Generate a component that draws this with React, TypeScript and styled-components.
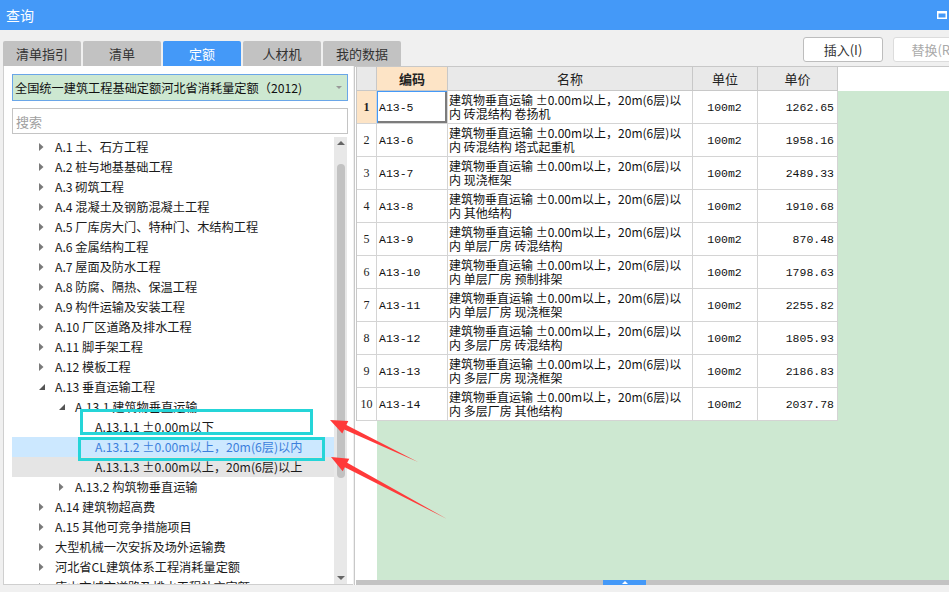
import React from "react"
import styled, { createGlobalStyle } from "styled-components"

const Blue = "#4499f8"
const Green = "#cde8d1"
const Peach = "#fde4c6"
const COLS = "20px 71px 245px 65px 80px"

const GlobalStyle = createGlobalStyle`
  html, body { margin: 0; padding: 0; }
  body {
    background: #f0f0f0;
    font-family: "Noto Sans CJK SC", "Noto Sans", sans-serif;
    color: #222;
  }
`

const TABS = ["清单指引", "清单", "定额", "人材机", "我的数据"]
const ACTIVE_TAB = 2

type TreeNode = {
  label: string
  level: number
  caret?: "open" | "closed"
  state?: "selected" | "hover"
}

const TREE: TreeNode[] = [
  { label: "A.1 土、石方工程", level: 0, caret: "closed" },
  { label: "A.2 桩与地基基础工程", level: 0, caret: "closed" },
  { label: "A.3 砌筑工程", level: 0, caret: "closed" },
  { label: "A.4 混凝土及钢筋混凝土工程", level: 0, caret: "closed" },
  { label: "A.5 厂库房大门、特种门、木结构工程", level: 0, caret: "closed" },
  { label: "A.6 金属结构工程", level: 0, caret: "closed" },
  { label: "A.7 屋面及防水工程", level: 0, caret: "closed" },
  { label: "A.8 防腐、隔热、保温工程", level: 0, caret: "closed" },
  { label: "A.9 构件运输及安装工程", level: 0, caret: "closed" },
  { label: "A.10 厂区道路及排水工程", level: 0, caret: "closed" },
  { label: "A.11 脚手架工程", level: 0, caret: "closed" },
  { label: "A.12 模板工程", level: 0, caret: "closed" },
  { label: "A.13 垂直运输工程", level: 0, caret: "open" },
  { label: "A.13.1 建筑物垂直运输", level: 1, caret: "open" },
  { label: "A.13.1.1 ±0.00m以下", level: 2 },
  { label: "A.13.1.2 ±0.00m以上，20m(6层)以内", level: 2, state: "selected" },
  { label: "A.13.1.3 ±0.00m以上，20m(6层)以上", level: 2, state: "hover" },
  { label: "A.13.2 构筑物垂直运输", level: 1, caret: "closed" },
  { label: "A.14 建筑物超高费", level: 0, caret: "closed" },
  { label: "A.15 其他可竞争措施项目", level: 0, caret: "closed" },
  { label: "大型机械一次安拆及场外运输费", level: 0, caret: "closed" },
  { label: "河北省CL建筑体系工程消耗量定额", level: 0, caret: "closed" },
  { label: "唐山市城市道路及排水工程补充定额", level: 0, caret: "closed" },
]

const NAME_HEAD = "建筑物垂直运输 ±0.00m以上，20m(6层)以"

const ROWS = [
  { code: "A13-5", tail: "内 砖混结构 卷扬机", price: "1262.65" },
  { code: "A13-6", tail: "内 砖混结构 塔式起重机", price: "1958.16" },
  { code: "A13-7", tail: "内 现浇框架", price: "2489.33" },
  { code: "A13-8", tail: "内 其他结构", price: "1910.68" },
  { code: "A13-9", tail: "内 单层厂房 砖混结构", price: "870.48" },
  { code: "A13-10", tail: "内 单层厂房 预制排架", price: "1798.63" },
  { code: "A13-11", tail: "内 单层厂房 现浇框架", price: "2255.82" },
  { code: "A13-12", tail: "内 多层厂房 砖混结构", price: "1805.93" },
  { code: "A13-13", tail: "内 多层厂房 现浇框架", price: "2186.83" },
  { code: "A13-14", tail: "内 多层厂房 其他结构", price: "2037.78" },
]

const Caret: React.FC<{ kind?: "open" | "closed" }> = ({ kind }) => {
  if (kind === "closed")
    return (
      <svg width="5" height="8" viewBox="0 0 5 8">
        <path d="M0 0L4.5 4L0 8Z" fill="#7a7a7a" />
      </svg>
    )
  if (kind === "open")
    return (
      <svg width="6" height="6" viewBox="0 0 6 6">
        <path d="M6 0V6H0Z" fill="#555" />
      </svg>
    )
  return null
}

// red annotation arrows, tip first
const ARROWS = [
  "330,420 348.3,421 346.4,425 418,462 344.2,429.6 342.3,433.6",
  "331,457 349.3,458.8 347.2,462.8 447,519 344.8,467.2 342.7,471.2",
]

export default function App() {
  return (
    <>
      <GlobalStyle />
      <S.Window>
        <S.TitleBar>
          <span>查询</span>
          <svg width="10" height="8" viewBox="0 0 10 8">
            <rect x="0.75" y="0.75" width="8.5" height="6.5" fill="none" stroke="#fff" strokeWidth="1.5" />
            <rect x="0" y="0" width="10" height="2.5" fill="#fff" />
          </svg>
        </S.TitleBar>

        <S.Toolbar>
          <S.TabStrip>
            {TABS.map((t, i) => (
              <S.Tab key={t} $active={i === ACTIVE_TAB}>{t}</S.Tab>
            ))}
          </S.TabStrip>
          <S.ButtonGroup>
            <S.ToolButton>插入(I)</S.ToolButton>
            <S.ToolButton $disabled>替换(R)</S.ToolButton>
          </S.ButtonGroup>
        </S.Toolbar>

        <S.Main>
          <S.LeftPanel>
            <S.Select>
              <span>全国统一建筑工程基础定额河北省消耗量定额（2012)</span>
              <svg width="6" height="3" viewBox="0 0 6 3">
                <path d="M0 0H6L3 3Z" fill="#999" />
              </svg>
            </S.Select>
            <S.Search>搜索</S.Search>
            <S.Tree>
              <S.TreeList>
                {TREE.map((n) => (
                  <S.TreeRow key={n.label} $level={n.level} $state={n.state}>
                    <S.CaretBox><Caret kind={n.caret} /></S.CaretBox>
                    {n.label}
                  </S.TreeRow>
                ))}
              </S.TreeList>
              <S.ScrollTrack>
                <svg width="8" height="4" viewBox="0 0 8 4">
                  <path d="M0 4L4 0L8 4Z" fill="#666" />
                </svg>
                <S.Thumb />
                <svg width="8" height="4" viewBox="0 0 8 4">
                  <path d="M0 0H8L4 4Z" fill="#666" />
                </svg>
              </S.ScrollTrack>
            </S.Tree>
          </S.LeftPanel>

          <S.RightPanel>
            <S.HeadStrip>
              <S.Grid>
                <S.HeadCell />
                <S.HeadCell $accent>编码</S.HeadCell>
                <S.HeadCell>名称</S.HeadCell>
                <S.HeadCell>单位</S.HeadCell>
                <S.HeadCell>单价</S.HeadCell>
              </S.Grid>
            </S.HeadStrip>
            <S.Body>
              <S.Grid>
                {ROWS.map((r, i) => (
                  <React.Fragment key={r.code}>
                    <S.NumCell $active={i === 0}>{i + 1}</S.NumCell>
                    <S.Cell $mono $focus={i === 0}>{r.code}</S.Cell>
                    <S.NameCell>
                      <span>{NAME_HEAD}</span>
                      <span>{r.tail}</span>
                    </S.NameCell>
                    <S.Cell $mono $align="center">100m2</S.Cell>
                    <S.Cell $mono $align="right">{r.price}</S.Cell>
                  </React.Fragment>
                ))}
              </S.Grid>
            </S.Body>
            <S.Splitter>
              <S.SplitToggle>
                <svg width="6" height="3" viewBox="0 0 6 3">
                  <path d="M0 3L3 0L6 3Z" fill="#fff" />
                </svg>
              </S.SplitToggle>
            </S.Splitter>
          </S.RightPanel>
        </S.Main>

        <S.Marker $x={80} $y={409} $w={233} $h={26} />
        <S.Marker $x={78} $y={437} $w={247} $h={24} />
        <S.Overlay width="949" height="592" viewBox="0 0 949 592">
          {ARROWS.map((p) => (
            <polygon key={p} points={p} fill="#ff3a3a" />
          ))}
        </S.Overlay>
      </S.Window>
    </>
  )
}

const S = {
  Window: styled.div`
    position: relative;
    width: 949px;
    height: 592px;
    overflow: hidden;
    display: flex;
    flex-direction: column;
  `,
  TitleBar: styled.div`
    height: 30px;
    flex: none;
    background: ${Blue};
    color: #fff;
    font-size: 14px;
    display: flex;
    align-items: center;
    justify-content: space-between;
    padding: 0 2px 0 6px;
    box-sizing: border-box;
  `,
  Toolbar: styled.div`
    height: 36px;
    flex: none;
    display: flex;
    padding-left: 3px;
  `,
  TabStrip: styled.div`
    display: flex;
    gap: 2px;
    align-self: flex-end;
  `,
  Tab: styled.div<{ $active?: boolean }>`
    width: 78px;
    height: 25px;
    border-radius: 2px 2px 0 0;
    background: ${({ $active }) => ($active ? Blue : "#c2c2c2")};
    color: ${({ $active }) => ($active ? "#fff" : "#333")};
    font-size: 13px;
    display: flex;
    align-items: center;
    justify-content: center;
  `,
  ButtonGroup: styled.div`
    margin-left: auto;
    margin-right: -24px;
    margin-top: 7px;
    display: flex;
    gap: 10px;
  `,
  ToolButton: styled.div<{ $disabled?: boolean }>`
    width: 80px;
    height: 25px;
    box-sizing: border-box;
    border: 1px solid ${({ $disabled }) => ($disabled ? "#dcdcdc" : "#bdbdbd")};
    border-radius: 3px;
    background: #fff;
    color: ${({ $disabled }) => ($disabled ? "#aaa" : "#333")};
    font-size: 13px;
    display: flex;
    align-items: center;
    justify-content: center;
  `,
  Main: styled.div`
    height: 519px;
    flex: none;
    display: flex;
    padding-left: 3px;
  `,
  LeftPanel: styled.div`
    width: 350px;
    flex: none;
    box-sizing: border-box;
    background: #fff;
    border-left: 1px solid #cfcfcf;
    border-bottom: 1px solid #cfcfcf;
    padding: 8px 5px 0 8px;
    display: flex;
    flex-direction: column;
  `,
  Select: styled.div`
    height: 27px;
    flex: none;
    box-sizing: border-box;
    border: 1px solid #6aa6e8;
    background: ${Green};
    padding: 0 5px 0 2px;
    display: flex;
    align-items: center;
    justify-content: space-between;
    font-size: 12.2px;
    color: #111;
    white-space: nowrap;
  `,
  Search: styled.div`
    height: 26px;
    flex: none;
    margin-top: 7px;
    box-sizing: border-box;
    border: 1px solid #c4c4c4;
    padding: 0 3px;
    display: flex;
    align-items: center;
    font-size: 13px;
    color: #a0a0a0;
  `,
  Tree: styled.div`
    flex: 1;
    min-height: 0;
    margin-top: 3px;
    margin-right: 1px;
    display: flex;
    overflow: hidden;
  `,
  TreeList: styled.div`
    flex: 1;
    overflow: hidden;
  `,
  TreeRow: styled.div<{ $level: number; $state?: "selected" | "hover" }>`
    height: 20px;
    display: flex;
    align-items: center;
    padding-left: ${({ $level }) => 27 + $level * 20}px;
    background: ${({ $state }) =>
      $state === "selected" ? "#cce8ff" : $state === "hover" ? "#e5e5e5" : "transparent"};
    color: ${({ $state }) => ($state === "selected" ? "#3c7fdc" : "#1a1a1a")};
    font-size: 12.2px;
    white-space: nowrap;
  `,
  CaretBox: styled.span`
    width: 16px;
    flex: none;
    display: flex;
    align-items: center;
  `,
  ScrollTrack: styled.div`
    width: 13px;
    flex: none;
    background: #e8e8e8;
    display: flex;
    flex-direction: column;
    align-items: center;
    justify-content: space-between;
    padding: 4px 0;
    box-sizing: border-box;
  `,
  Thumb: styled.div`
    width: 8px;
    height: 314px;
    margin-top: 19px;
    margin-bottom: auto;
    border-radius: 4px;
    background: #c2c2c2;
  `,
  RightPanel: styled.div`
    flex: 1;
    min-width: 0;
    margin-left: 1px;
    border-left: 1px solid #c8c8c8;
    border-top: 1px solid #c8c8c8;
    padding-left: 1px;
    display: flex;
    flex-direction: column;
    background: #fff;
  `,
  HeadStrip: styled.div`
    height: 24px;
    flex: none;
    background: #fff;
  `,
  Grid: styled.div`
    display: grid;
    grid-template-columns: ${COLS};
    width: max-content;
    border-left: 1px solid #c8c8c8;
  `,
  HeadCell: styled.div<{ $accent?: boolean }>`
    height: 24px;
    box-sizing: border-box;
    border-right: 1px solid #c8c8c8;
    border-bottom: 1px solid #c8c8c8;
    background: ${({ $accent }) => ($accent ? Peach : "#e9e9e9")};
    font-weight: ${({ $accent }) => ($accent ? 700 : 400)};
    font-size: 13px;
    display: flex;
    align-items: center;
    justify-content: center;
  `,
  Body: styled.div`
    flex: 1;
    min-height: 0;
    background: linear-gradient(to right, #fff 21px, ${Green} 21px);
  `,
  NumCell: styled.div<{ $active?: boolean }>`
    height: 33px;
    box-sizing: border-box;
    border-right: 1px solid #d4d4d4;
    border-bottom: 1px solid #d4d4d4;
    background: ${({ $active }) => ($active ? Peach : "#fff")};
    font-weight: ${({ $active }) => ($active ? 700 : 400)};
    font-family: "Liberation Serif", serif;
    font-size: 12px;
    display: flex;
    align-items: center;
    justify-content: center;
  `,
  Cell: styled.div<{ $mono?: boolean; $align?: "left" | "center" | "right"; $focus?: boolean }>`
    height: 33px;
    box-sizing: border-box;
    border-right: 1px solid #d4d4d4;
    border-bottom: 1px solid #d4d4d4;
    background: #fff;
    padding: 0 3px 0 2px;
    font-family: ${({ $mono }) => ($mono ? `"Liberation Mono", monospace` : "inherit")};
    font-size: 11.5px;
    color: #111;
    display: flex;
    align-items: center;
    justify-content: ${({ $align }) =>
      $align === "center" ? "center" : $align === "right" ? "flex-end" : "flex-start"};
    box-shadow: ${({ $focus }) =>
      $focus ? `inset 1px 1px 0 ${Blue}, inset -2px -2px 0 #7c7c7c` : "none"};
  `,
  NameCell: styled.div`
    height: 33px;
    box-sizing: border-box;
    border-right: 1px solid #d4d4d4;
    border-bottom: 1px solid #d4d4d4;
    background: #fff;
    padding-left: 1px;
    display: flex;
    flex-direction: column;
    justify-content: center;
    font-size: 12px;
    line-height: 14px;
    color: #111;
    white-space: nowrap;
    overflow: hidden;
  `,
  Splitter: styled.div`
    height: 5px;
    flex: none;
    background: #c3c3c3;
    display: flex;
  `,
  SplitToggle: styled.div`
    width: 43px;
    margin-left: 247px;
    background: ${Blue};
    display: flex;
    align-items: center;
    justify-content: center;
  `,
  Marker: styled.div<{ $x: number; $y: number; $w: number; $h: number }>`
    position: absolute;
    left: ${({ $x }) => $x}px;
    top: ${({ $y }) => $y}px;
    width: ${({ $w }) => $w}px;
    height: ${({ $h }) => $h}px;
    box-sizing: border-box;
    border: 3px solid #25d5d8;
    pointer-events: none;
  `,
  Overlay: styled.svg`
    position: absolute;
    left: 0;
    top: 0;
    pointer-events: none;
  `,
}
